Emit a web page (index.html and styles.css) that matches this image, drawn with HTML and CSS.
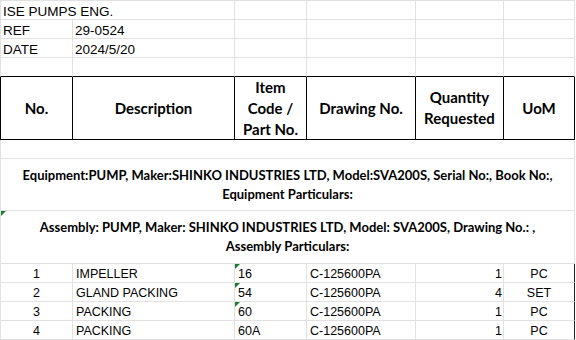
FILE: index.html
```html
<!DOCTYPE html>
<html>
<head>
<meta charset="utf-8">
<link rel="stylesheet" href="styles.css">
</head>
<body>
<div class="sheet">
  <div class="c first top span-ab">ISE PUMPS ENG.</div>
  <div class="c top"></div><div class="c top"></div><div class="c top"></div><div class="c top"></div>

  <div class="c first">REF</div><div class="c">29-0524</div>
  <div class="c"></div><div class="c"></div><div class="c"></div><div class="c"></div>

  <div class="c first">DATE</div><div class="c">2024/5/20</div>
  <div class="c"></div><div class="c"></div><div class="c"></div><div class="c"></div>

  <div class="c first above"></div><div class="c above"></div><div class="c above"></div>
  <div class="c above"></div><div class="c above"></div><div class="c above"></div>

  <div class="c first head">No.</div>
  <div class="c head">Description</div>
  <div class="c head">Item<br>Code /<br>Part No.</div>
  <div class="c head">Drawing No.</div>
  <div class="c head">Quantity<br>Requested</div>
  <div class="c head">UoM</div>

  <div class="c first full"></div>

  <div class="c first full group">Equipment:PUMP, Maker:SHINKO INDUSTRIES LTD, Model:SVA200S, Serial No:, Book No:,<br>Equipment Particulars:</div>

  <div class="c first full group flag">Assembly: PUMP, Maker: SHINKO INDUSTRIES LTD, Model: SVA200S, Drawing No.: ,<br>Assembly Particulars:</div>

  <div class="c first d center">1</div><div class="c d">IMPELLER</div><div class="c d flag">16</div><div class="c d">C-125600PA</div><div class="c d right">1</div><div class="c d center last">PC</div>
  <div class="c first d center">2</div><div class="c d">GLAND PACKING</div><div class="c d flag">54</div><div class="c d">C-125600PA</div><div class="c d right">4</div><div class="c d center last">SET</div>
  <div class="c first d center">3</div><div class="c d">PACKING</div><div class="c d flag">60</div><div class="c d">C-125600PA</div><div class="c d right">1</div><div class="c d center last">PC</div>
  <div class="c first d center">4</div><div class="c d">PACKING</div><div class="c d">60A</div><div class="c d">C-125600PA</div><div class="c d right">1</div><div class="c d center last">PC</div>
</div>
</body>
</html>
```

FILE: styles.css
```css
html, body {
  margin: 0;
  padding: 0;
  background: #ffffff;
}

.sheet {
  display: grid;
  grid-template-columns: 73px 162px 72px 109px 88px 71px;
  grid-template-rows: 20px 19px 19px 19px 63px 19px 52px 53px 19px 19px 19px 19px;
  width: 575px;
  font-family: "Liberation Sans", Arial, sans-serif;
  font-size: 13.5px;
  color: #000;
}

.c {
  box-sizing: border-box;
  border-right: 1px solid #e1e1e1;
  border-bottom: 1px solid #e1e1e1;
  display: flex;
  align-items: flex-end;
  padding: 0 2px;
  line-height: 15px;
  white-space: nowrap;
  overflow: visible;
  position: relative;
}

.first { border-left: 1px solid #e1e1e1; }
.top { border-top: 1px solid #e1e1e1; }

.span-ab { grid-column: 1 / 3; }

.above { border-bottom-color: #000; }

.head {
  border-right-color: #000;
  border-bottom-color: #000;
  font-family: Lato, "Noto Sans", sans-serif;
  font-weight: 700;
  font-size: 15px;
  line-height: 21px;
  align-items: center;
  justify-content: center;
  text-align: center;
}
.head.first { border-left-color: #000; }

.full { grid-column: 1 / -1; }

.group {
  font-family: Lato, "Noto Sans", sans-serif;
  font-weight: 700;
  font-size: 13px;
  line-height: 19px;
  align-items: center;
  justify-content: center;
  text-align: center;
}

.d {
  font-size: 12.5px;
  padding-left: 3px;
}
.d.center { justify-content: center; padding: 0; }
.d.right { justify-content: flex-end; padding: 0 1px 0 0; }
.d.last { border-right-color: #222; }

.flag::before {
  content: "";
  position: absolute;
  left: 0;
  top: 0;
  width: 5px;
  height: 5px;
  background: #1e7b2e;
  clip-path: polygon(0 0, 100% 0, 0 100%);
}
```
